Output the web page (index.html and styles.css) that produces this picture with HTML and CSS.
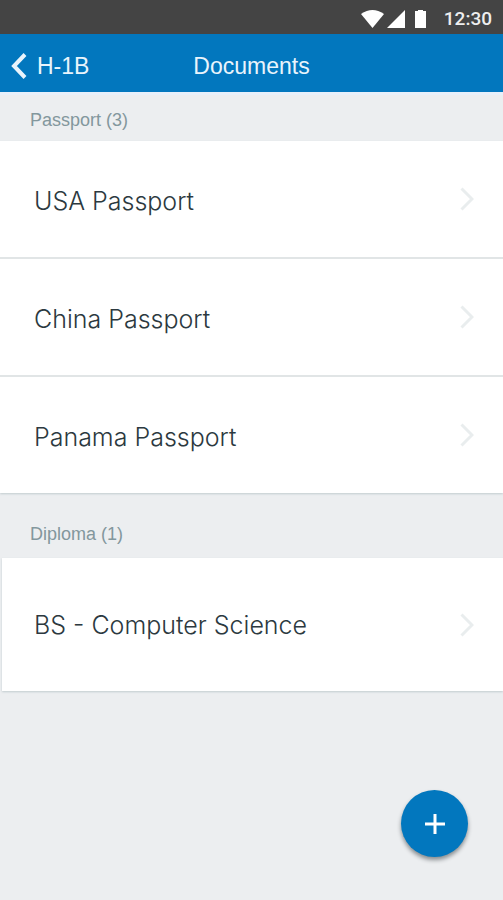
FILE: index.html
```html
<!DOCTYPE html>
<html lang="en">
<head>
<meta charset="utf-8">
<meta name="viewport" content="width=device-width, initial-scale=1">
<title>Documents</title>
<link rel="stylesheet" href="styles.css">
</head>
<body>
<div class="status">
  <svg class="status-icons" width="68" height="20" viewBox="0 0 68 20" aria-hidden="true">
    <path d="M1 5Q12.500 -3 24 5L12.500 19Z"/>
    <path d="M45 1V19H27Z"/>
    <path d="M58 1h5v1h3v17H55V2h3Z"/>
  </svg>
  <time>12:30</time>
</div>
<header class="bar">
  <a class="back" href="#">
    <svg width="16" height="26" viewBox="0 0 16 26" aria-hidden="true"><path d="M14 1.500L3 13L14 24.500"/></svg>
    <span>H-1B</span>
  </a>
  <h1>Documents</h1>
</header>
<main>
  <section>
    <h2 class="label">Passport (3)</h2>
    <ul class="list">
      <li><a class="row" href="#"><span>USA Passport</span><svg class="chevron" width="14" height="24" viewBox="0 0 14 24" aria-hidden="true"><path d="M1.500 1.500L12 12L1.500 22.500"/></svg></a></li>
      <li><a class="row" href="#"><span>China Passport</span><svg class="chevron" width="14" height="24" viewBox="0 0 14 24" aria-hidden="true"><path d="M1.500 1.500L12 12L1.500 22.500"/></svg></a></li>
      <li><a class="row" href="#"><span>Panama Passport</span><svg class="chevron" width="14" height="24" viewBox="0 0 14 24" aria-hidden="true"><path d="M1.500 1.500L12 12L1.500 22.500"/></svg></a></li>
    </ul>
  </section>
  <section>
    <h2 class="label label-tall">Diploma (1)</h2>
    <ul class="list list-single">
      <li><a class="row" href="#"><span>BS - Computer Science</span><svg class="chevron" width="14" height="24" viewBox="0 0 14 24" aria-hidden="true"><path d="M1.500 1.500L12 12L1.500 22.500"/></svg></a></li>
    </ul>
  </section>
</main>
<button class="add" type="button" aria-label="Add document">
  <svg width="22" height="22" viewBox="0 0 22 22" aria-hidden="true"><path d="M11 1V21M1 11H21"/></svg>
</button>
</body>
</html>
```
FILE: styles.css
```css
* {
  box-sizing: border-box;
}

body {
  margin: 0;
  min-height: 100vh;
  background: #eceef0;
  font-family: "Liberation Sans", Arial, sans-serif;
}

a {
  color: inherit;
  text-decoration: none;
}

.status {
  display: flex;
  align-items: center;
  justify-content: flex-end;
  gap: 16px;
  height: 34px;
  padding: 4px 11px 0 0;
  background: #444;
  color: #eee;
  font: 500 19px/20px Roboto, sans-serif;
}

.status-icons {
  fill: #fff;
}

.bar {
  display: grid;
  grid-template-columns: 1fr auto 1fr;
  align-items: center;
  height: 61px;
  padding: 6px 11px 0;
  border-bottom: 3px solid #e8f0fa;
  background: #0277be;
  background-clip: padding-box;
  color: #e9f4fc;
  font-size: 23px;
  line-height: 28px;
}

.bar h1 {
  margin: 0;
  font-size: 23px;
  font-weight: 400;
}

.back {
  display: flex;
  align-items: center;
  gap: 10px;
}

.back svg {
  fill: none;
  stroke: #e9f4fc;
  stroke-width: 4;
}

.label {
  display: flex;
  align-items: center;
  height: 46px;
  margin: 0;
  padding: 5px 30px 0;
  color: #83979d;
  font-size: 18px;
  font-weight: 400;
}

.label-tall {
  height: 65px;
  padding-top: 18px;
}

.list {
  margin: 0;
  padding: 0;
  list-style: none;
  background: #fff;
  box-shadow: 0 1px 2px #c2cccf;
}

.list li + li {
  border-top: 2px solid #e1e5e6;
}

.row {
  display: flex;
  align-items: center;
  justify-content: space-between;
  height: 116px;
  padding: 0 29px 0 34px;
  color: #2c3940;
  font: 300 25px/30px Inter, "Liberation Sans", sans-serif;
}

.row span {
  padding-top: 4px;
}

.chevron {
  fill: none;
  stroke: #e9edee;
  stroke-width: 3;
}

.list-single {
  margin-left: 2px;
}

.list-single .row {
  height: 133px;
  padding-left: 32px;
}

.list-single span {
  padding-top: 0;
}

.add {
  position: fixed;
  right: 35px;
  bottom: 43px;
  display: grid;
  place-items: center;
  width: 67px;
  height: 67px;
  padding: 0;
  border: 0;
  border-radius: 50%;
  background: #0277be;
  box-shadow: 0 3px 4px #888d90;
}

.add svg {
  stroke: #fff;
  stroke-width: 3;
}
```
